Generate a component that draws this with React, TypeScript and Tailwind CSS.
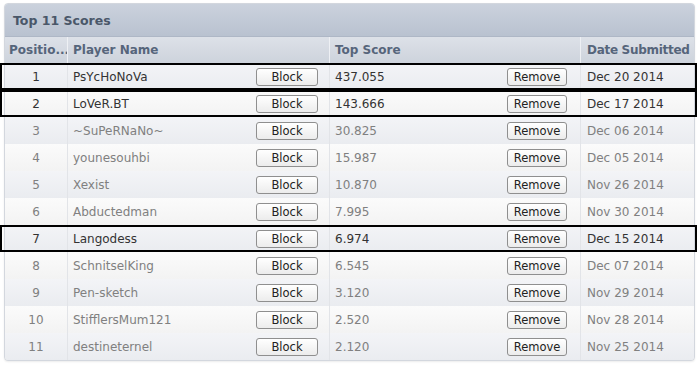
import React from 'react';

type ScoreRow = { pos: number; name: string; score: string; date: string; marked?: boolean };

const rows: ScoreRow[] = [
  { pos: 1, name: 'PsYcHoNoVa', score: '437.055', date: 'Dec 20 2014', marked: true },
  { pos: 2, name: 'LoVeR.BT', score: '143.666', date: 'Dec 17 2014', marked: true },
  { pos: 3, name: '~SuPeRNaNo~', score: '30.825', date: 'Dec 06 2014' },
  { pos: 4, name: 'younesouhbi', score: '15.987', date: 'Dec 05 2014' },
  { pos: 5, name: 'Xexist', score: '10.870', date: 'Nov 26 2014' },
  { pos: 6, name: 'Abductedman', score: '7.995', date: 'Nov 30 2014' },
  { pos: 7, name: 'Langodess', score: '6.974', date: 'Dec 15 2014', marked: true },
  { pos: 8, name: 'SchnitselKing', score: '6.545', date: 'Dec 07 2014' },
  { pos: 9, name: 'Pen-sketch', score: '3.120', date: 'Nov 29 2014' },
  { pos: 10, name: 'StifflersMum121', score: '2.520', date: 'Nov 28 2014' },
  { pos: 11, name: 'destineternel', score: '2.120', date: 'Nov 25 2014' },
];

const cols = 'grid grid-cols-[63px_262px_251px_113px]';

const SmallButton = ({ label, width }: { label: string; width: string }) => (
  <button
    className={`${width} h-[18px] flex items-center justify-center rounded-[3px] border border-[#8f8f8f] bg-gradient-to-b from-white to-[#ececec] text-[11.5px] leading-[16px] text-[#222]`}
  >
    {label}
  </button>
);

const App: React.FC = () => {
  return (
    <div className="w-[698px] h-[367px] bg-white pt-[3px] pl-[4px] font-['DejaVu_Sans',Verdana,sans-serif]">
      <div className="w-[691px] rounded-[4px] border border-[#d3d7de] bg-[#f4f5f7] shadow-[0_1px_2px_rgba(0,0,0,0.08)]">
        {/* title bar */}
        <div className="h-[33px] flex items-center pl-[8px] pt-[3px] rounded-t-[3px] bg-gradient-to-b from-[#cbd2dd] to-[#b9c2d0] border-b border-[#aeb7c6]">
          <span className="text-[12.5px] font-bold text-[#4a5769]">Top 11 Scores</span>
        </div>

        {/* column header */}
        <div className={`${cols} h-[26px] bg-gradient-to-b from-[#dde1e8] to-[#cdd3dc] text-[12px] font-bold text-[#56657b] whitespace-nowrap`}>
          <div className="flex items-center pl-[4px] border-r border-[#eef0f4] overflow-hidden">Positio...</div>
          <div className="flex items-center pl-[5px] border-r border-[#eef0f4]">Player Name</div>
          <div className="flex items-center pl-[5px] border-r border-[#eef0f4]">Top Score</div>
          <div className="flex items-center pl-[6px] tracking-[-0.3px]">Date Submitted</div>
        </div>

        {/* rows */}
        {rows.map((r, i) => (
          <div
            key={r.pos}
            className={`${cols} relative h-[27px] text-[12px] ${r.marked ? 'text-[#333]' : 'text-[#808080]'} ${
              i % 2 === 0
                ? 'bg-gradient-to-b from-[#f3f4f7] to-[#eaecf0]'
                : 'bg-gradient-to-b from-[#fbfbfb] to-[#f3f3f3]'
            } ${i === rows.length - 1 ? 'rounded-b-[3px]' : ''}`}
          >
            <div className="flex items-center justify-center border-r border-[#e2e4e8]">{r.pos}</div>
            <div className="flex items-center justify-between pl-[5px] pr-[11px] border-r border-[#e2e4e8]">
              <span>{r.name}</span>
              <SmallButton label="Block" width="w-[62px]" />
            </div>
            <div className="flex items-center justify-between pl-[5px] pr-[13px] border-r border-[#e2e4e8]">
              <span>{r.score}</span>
              <SmallButton label="Remove" width="w-[60px]" />
            </div>
            <div className="flex items-center pl-[6px]">{r.date}</div>
            {r.marked && (
              <div className="absolute top-0 bottom-0 -left-[5px] -right-[3px] border-2 border-black pointer-events-none" />
            )}
          </div>
        ))}
      </div>
    </div>
  );
};

export default App;
